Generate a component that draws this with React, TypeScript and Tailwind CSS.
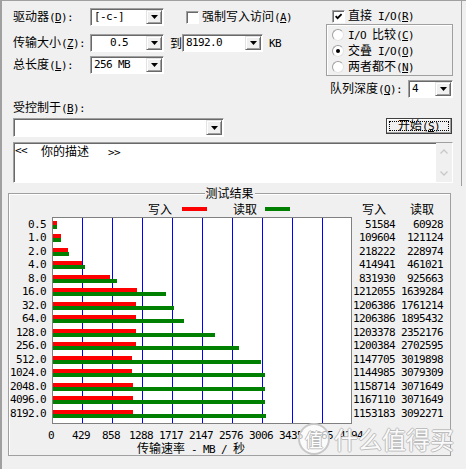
import React from 'react';

const MONO = "font-['DejaVu_Sans_Mono',monospace] text-[11px] tracking-[-0.62px]";

const rows: [string, number, number][] = [
  ['0.5', 51584, 60928],
  ['1.0', 109604, 121124],
  ['2.0', 218222, 228974],
  ['4.0', 414941, 461021],
  ['8.0', 831930, 925663],
  ['16.0', 1212055, 1639284],
  ['32.0', 1206386, 1761214],
  ['64.0', 1206386, 1895432],
  ['128.0', 1203378, 2352176],
  ['256.0', 1200384, 2702595],
  ['512.0', 1147705, 3019898],
  ['1024.0', 1144985, 3079309],
  ['2048.0', 1158714, 3071649],
  ['4096.0', 1167110, 3071649],
  ['8192.0', 1153183, 3092271],
];

const ticks = ['0', '429', '858', '1288', '1717', '2147', '2576', '3006', '3435', '3865', '4294'];

function M({ children }: { children: React.ReactNode }) {
  return <span className={MONO}>{children}</span>;
}

function DropBtn() {
  return (
    <div className="ml-auto flex h-full w-[16px] shrink-0 items-center justify-center border border-t-[#e3e3e3] border-l-[#e3e3e3] border-r-[#696969] border-b-[#696969] bg-[#f0f0f0] shadow-[inset_1px_1px_0_#fff,inset_-1px_-1px_0_#a0a0a0]">
      <svg width="7" height="4" viewBox="0 0 7 4">
        <path d="M0 0H7L3.5 4Z" fill="#000" />
      </svg>
    </div>
  );
}

function Combo({ className, children, center }: { className: string; children?: React.ReactNode; center?: boolean }) {
  return (
    <div className={`flex shrink-0 border border-t-[#a0a0a0] border-l-[#a0a0a0] border-r-white border-b-white bg-white p-[1px] shadow-[inset_1px_1px_0_#696969] ${className}`}>
      <div className={`flex min-w-0 flex-1 items-center ${center ? 'justify-center' : 'pl-[2px]'}`}>{children}</div>
      <DropBtn />
    </div>
  );
}

function Check({ checked }: { checked?: boolean }) {
  return (
    <div className="flex h-[13px] w-[13px] shrink-0 items-center justify-center border border-t-[#a0a0a0] border-l-[#a0a0a0] border-r-white border-b-white bg-white shadow-[inset_1px_1px_0_#696969]">
      {checked && (
        <svg width="7" height="7" viewBox="0 0 7 7">
          <path d="M0.6 3.2L2.6 5.2L6.6 1.2" fill="none" stroke="#000" strokeWidth="1.8" />
        </svg>
      )}
    </div>
  );
}

function Radio({ on }: { on?: boolean }) {
  return (
    <div className="flex h-[12px] w-[12px] shrink-0 items-center justify-center rounded-full border border-t-[#a0a0a0] border-l-[#a0a0a0] border-r-[#e3e3e3] border-b-[#e3e3e3] bg-white">
      {on && <div className="h-[4px] w-[4px] rounded-full bg-black" />}
    </div>
  );
}

function Chevron({ up }: { up?: boolean }) {
  return (
    <svg width="8" height="5" viewBox="0 0 8 5">
      <path d={up ? 'M0.5 4.5L4 1L7.5 4.5' : 'M0.5 0.5L4 4L7.5 0.5'} fill="none" stroke="#c8c8c8" strokeWidth="1.3" />
    </svg>
  );
}

export default function App() {
  return (
    <div className="relative h-[469px] w-[466px] overflow-hidden border-l-2 border-t border-[#a0a0a0] bg-[#f0f0f0] font-['Noto_Sans_CJK_SC',sans-serif] text-[12px] leading-[14px] text-black">
      {/* settings */}
      <div className="h-[185px] w-[460px] border-r border-[#a0a0a0] pl-[11px]">
        <div className="flex">
          <div className="w-[313px] pt-[7px]">
            <div className="flex h-[18px] items-center">
              <span className="w-[77px] shrink-0">驱动器<M>(<u>D</u>):</M></span>
              <Combo className="h-[18px] w-[74px]"><M>[-c-]</M></Combo>
              <div className="ml-[22px]"><Check /></div>
              <span className="ml-[3px]">强制写入访问<M>(<u>A</u>)</M></span>
            </div>
            <div className="mt-[8px] flex h-[18px] items-center">
              <span className="w-[77px] shrink-0">传输大小<M>(<u>Z</u>):</M></span>
              <Combo className="h-[18px] w-[74px]" center><M>0.5</M></Combo>
              <span className="ml-[6px] w-[12px]">到</span>
              <Combo className="h-[18px] w-[81px]"><M>8192.0</M></Combo>
              <span className="ml-[6px]"><M>KB</M></span>
            </div>
            <div className="mt-[4px] flex h-[18px] items-center">
              <span className="w-[77px] shrink-0">总长度<M>(<u>L</u>):</M></span>
              <Combo className="h-[18px] w-[74px]"><M>256 MB</M></Combo>
            </div>
          </div>
          <div className="w-[127px] pt-[8px]">
            <div className="flex h-[14px] items-center">
              <div className="ml-[6px]"><Check checked /></div>
              <span className="ml-[3px]">直接<M> I/O(<u>R</u>)</M></span>
            </div>
            <div className="mt-[1px] h-[52px] border border-[#a0a0a0] pt-[2px] shadow-[inset_1px_1px_0_#fff]">
              <div className="flex h-[16px] items-center pl-[5px]">
                <Radio />
                <span className="ml-[4px]"><M>I/O </M>比较<M>(<u>C</u>)</M></span>
              </div>
              <div className="flex h-[16px] items-center pl-[5px]">
                <Radio on />
                <span className="ml-[4px]">交叠<M> I/O(<u>O</u>)</M></span>
              </div>
              <div className="flex h-[16px] items-center pl-[5px]">
                <Radio />
                <span className="ml-[4px]">两者都不<M>(<u>N</u>)</M></span>
              </div>
            </div>
            <div className="mt-[4px] flex h-[18px] items-center">
              <span className="ml-[4px] w-[78px] shrink-0">队列深度<M>(<u>Q</u>):</M></span>
              <Combo className="h-[18px] w-[45px]"><M>4</M></Combo>
            </div>
          </div>
        </div>
        <div className="mt-[3px] flex h-[14px] items-center">
          <span>受控制于<M>(<u>B</u>):</M></span>
        </div>
        <div className="mt-[3px] flex items-start">
          <Combo className="h-[19px] w-[211px]" />
          <div className="ml-[162px] flex h-[16px] w-[66px] items-center justify-center border border-[#404040] bg-[#f0f0f0] p-[2px] shadow-[inset_-1px_-1px_0_#a0a0a0,inset_1px_1px_0_#fff]">
            <div className="flex h-full w-full items-center justify-center border border-dotted border-black leading-[12px]">
              <span>开始<M>(<u>S</u>)</M></span>
            </div>
          </div>
        </div>
        <div className="mt-[5px] flex h-[41px] w-[440px] border border-t-[#a0a0a0] border-l-[#a0a0a0] border-r-white border-b-white bg-white shadow-[inset_1px_1px_0_#696969]">
          <div className="flex flex-1 items-start pl-[1px] pt-[1px]">
            <M>&lt;&lt;</M>
            <span className="ml-[14px]">你的描述</span>
            <span className="ml-[19px]"><M>&gt;&gt;</M></span>
          </div>
          <div className="flex w-[16px] flex-col items-center justify-between bg-[#f0f0f0] py-[6px]">
            <Chevron up />
            <Chevron />
          </div>
        </div>
      </div>

      {/* results */}
      <div className="relative ml-[6px] mt-[7px] h-[263px] w-[443px] border border-[#a0a0a0] shadow-[inset_1px_1px_0_#fff]">
        <span className="absolute -top-[8px] left-1/2 -translate-x-1/2 bg-[#f0f0f0] px-[1px]">测试结果</span>
        <div className="mt-[8px] flex h-[14px] items-center">
          <span className="ml-[139px]">写入</span>
          <div className="ml-[10px] h-[4px] w-[25px] bg-[#ff0000]" />
          <span className="ml-[26px]">读取</span>
          <div className="ml-[8px] h-[4px] w-[25px] bg-[#008000]" />
          <span className="ml-[72px]">写入</span>
          <span className="ml-[24px]">读取</span>
        </div>
        <div className="mt-[1px] flex h-[207px]">
          <div className="flex w-[37px] flex-col pt-[1px] text-right">
            {rows.map((r) => (
              <div key={r[0]} className="flex h-[13.5px] items-center justify-end"><M>{r[0]}</M></div>
            ))}
          </div>
          <svg width="300" height="207" className="ml-[6px] shrink-0">
            <rect x="0.5" y="0.5" width="299" height="206" fill="#fff" stroke="#808080" />
            {Array.from({ length: 9 }, (_, k) => (
              <line key={k} x1={30 * (k + 1) + 0.5} x2={30 * (k + 1) + 0.5} y1={1} y2={206} stroke="#0000ff" />
            ))}
            {rows.map((r, i) => {
              const y = Math.floor(4 + 13.5 * i);
              return (
                <g key={r[0]}>
                  <rect x={1} y={y} width={Math.max(2, Math.round(r[1] / 14500))} height={4} fill="#ff0000" />
                  <rect x={1} y={y + 4} width={Math.max(2, Math.round(r[2] / 14500))} height={4} fill="#008000" />
                </g>
              );
            })}
          </svg>
          <div className="flex w-[43px] flex-col pt-[1px]">
            {rows.map((r) => (
              <div key={r[0]} className="flex h-[13.5px] items-center justify-end"><M>{r[1]}</M></div>
            ))}
          </div>
          <div className="flex w-[48px] flex-col pt-[1px]">
            {rows.map((r) => (
              <div key={r[0]} className="flex h-[13.5px] items-center justify-end"><M>{r[2]}</M></div>
            ))}
          </div>
        </div>
        <div className="ml-[27px] mt-[5px] flex h-[12px] items-center leading-[12px]">
          {ticks.map((t) => (
            <div key={t} className="w-[30px] shrink-0 text-center"><M>{t}</M></div>
          ))}
        </div>
        <div className="ml-[128px] mt-[2px] flex h-[12px] items-center leading-[12px]">
          <span>传输速率<M> - MB / </M>秒</span>
        </div>
      </div>

      {/* watermark */}
      <div className="absolute left-[296px] top-[422px] flex h-[32px] w-[32px] items-center justify-center rounded-full border-2 border-[#c8c8c8] bg-white/70 text-[18px] text-white [text-shadow:1px_0_0_#bdbdbd,-1px_0_0_#bdbdbd,0_1px_0_#bdbdbd,0_-1px_0_#bdbdbd]">
        值
      </div>
      <div className="absolute left-[332px] top-[424px] text-[24px] leading-[28px] text-white/95 [text-shadow:1px_0_0_#bdbdbd,-1px_0_0_#bdbdbd,0_1px_0_#bdbdbd,0_-1px_0_#bdbdbd]">
        什么值得买
      </div>
    </div>
  );
}
